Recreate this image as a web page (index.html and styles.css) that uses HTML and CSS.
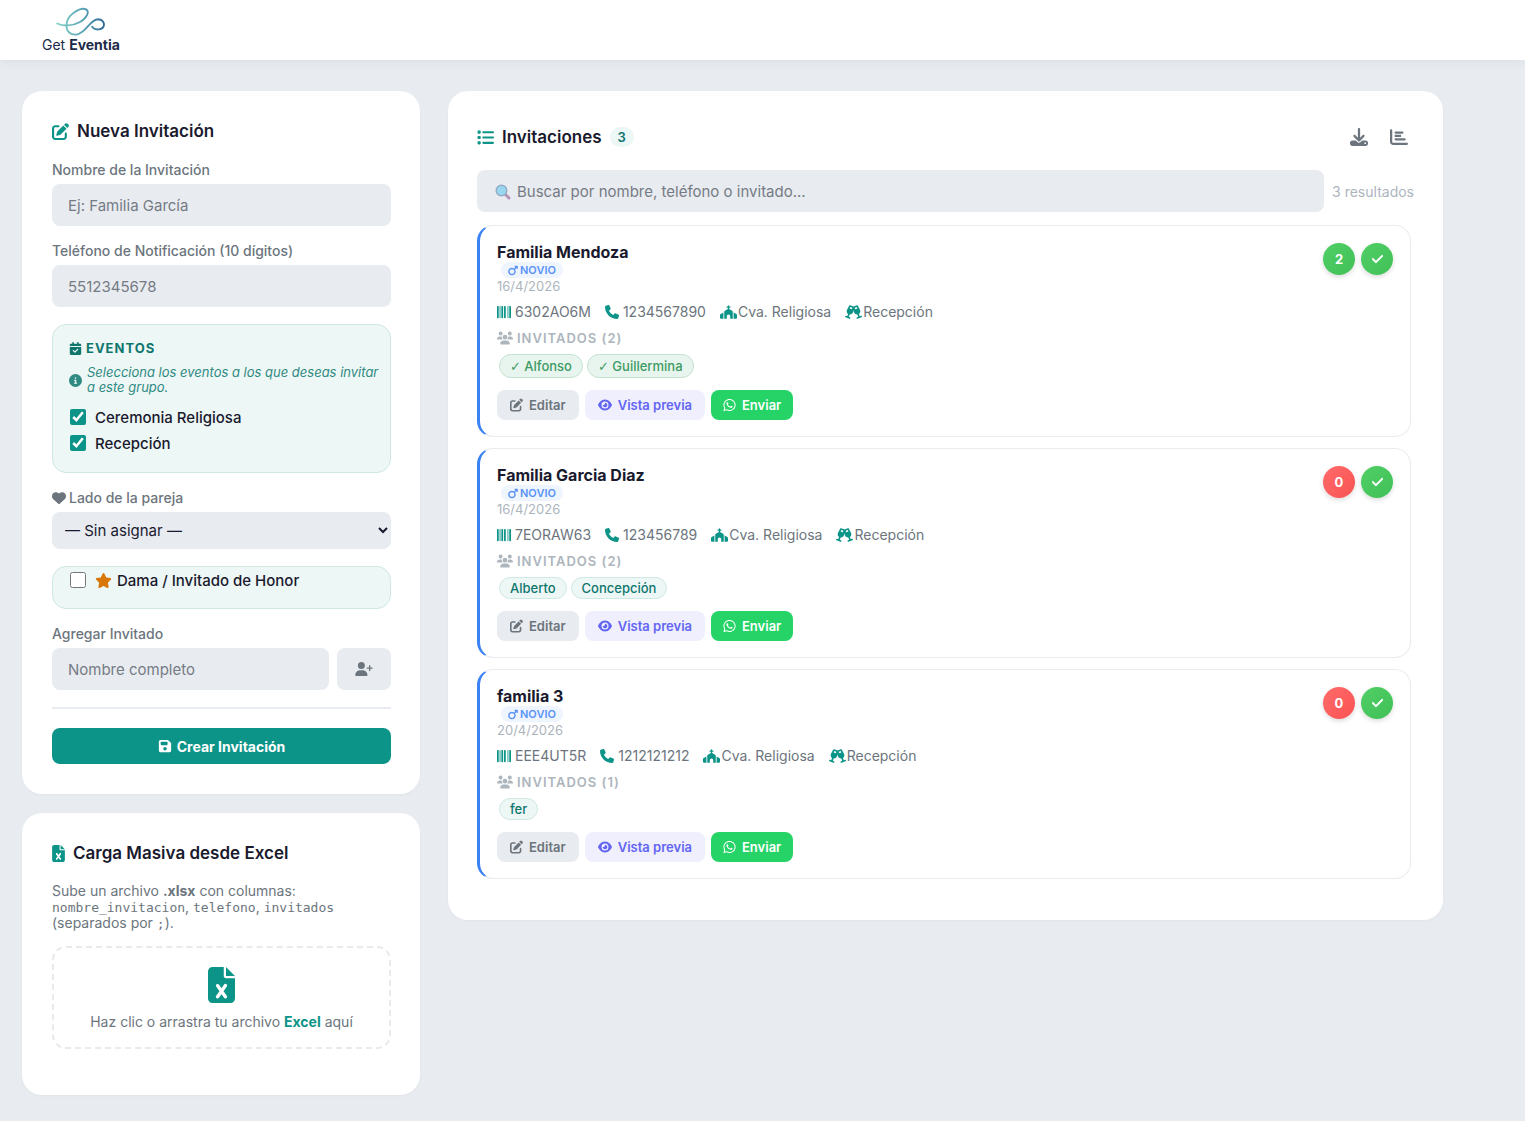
FILE: index.html
```html
<!DOCTYPE html>
<html lang="es">
<head>
<meta charset="UTF-8">
<meta name="viewport" content="width=device-width, initial-scale=1.0">
<title>Get Eventia - Invitaciones</title>
<link rel="stylesheet" href="styles.css">
</head>
<body>

<!-- Iconos -->
<svg class="sprite" aria-hidden="true">
  <symbol id="i-edit" viewBox="0 0 512 512"><path d="M471.6 21.7c-21.9-21.9-57.3-21.9-79.2 0L362.3 51.7l97.9 97.9 30.1-30.1c21.9-21.9 21.9-57.3 0-79.2L471.6 21.7zm-299.2 220c-6.1 6.1-10.8 13.6-13.5 21.9l-29.6 88.8c-2.9 8.6-.6 18.1 5.8 24.6s15.9 8.7 24.6 5.8l88.8-29.6c8.2-2.7 15.7-7.4 21.9-13.5L437.7 172.3 339.7 74.3 172.4 241.7zM96 64C43 64 0 107 0 160V416c0 53 43 96 96 96H352c53 0 96-43 96-96V320c0-17.7-14.3-32-32-32s-32 14.3-32 32v96c0 17.7-14.3 32-32 32H96c-17.7 0-32-14.3-32-32V160c0-17.7 14.3-32 32-32h96c17.7 0 32-14.3 32-32s-14.3-32-32-32H96z"/></symbol>
  <symbol id="i-heart" viewBox="0 0 512 512"><path d="M47.6 300.4L228.3 469.1c7.5 7 17.4 10.9 27.7 10.9s20.2-3.9 27.7-10.9L464.4 300.4c30.4-28.3 47.6-68 47.6-109.5v-5.8c0-69.9-50.5-129.5-119.4-141C347 36.5 300.6 51.4 268 84L256 96 244 84c-32.6-32.6-79-47.5-124.6-39.9C50.5 55.6 0 115.2 0 185.1v5.8c0 41.5 17.2 81.2 47.6 109.5z"/></symbol>
  <symbol id="i-star" viewBox="0 0 576 512"><path d="M316.9 18C311.6 7 300.4 0 288.1 0s-23.4 7-28.8 18L195 150.3 51.4 171.5c-12 1.8-22 10.2-25.7 21.7s-.7 24.2 7.9 32.7L137.8 329 113.2 474.7c-2 12 3 24.2 12.9 31.3s23 8 33.8 2.3l128.3-68.5 128.3 68.5c10.8 5.7 23.9 4.9 33.8-2.3s14.9-19.3 12.9-31.3L438.5 329 542.7 225.9c8.6-8.5 11.7-21.2 7.9-32.7s-13.7-19.9-25.7-21.7L381.2 150.3 316.9 18z"/></symbol>
  <symbol id="i-calendar" viewBox="0 0 448 512"><path d="M128 0c17.7 0 32 14.3 32 32V64H288V32c0-17.7 14.3-32 32-32s32 14.3 32 32V64h48c26.5 0 48 21.5 48 48v48H0V112C0 85.5 21.5 64 48 64H96V32c0-17.7 14.3-32 32-32zM0 192H448V464c0 26.5-21.5 48-48 48H48c-26.5 0-48-21.5-48-48V192zM329 305c9.4-9.4 9.4-24.6 0-33.9s-24.6-9.4-33.9 0l-95 95-47-47c-9.4-9.4-24.6-9.4-33.9 0s-9.4 24.6 0 33.9l64 64c9.4 9.4 24.6 9.4 33.9 0L329 305z"/></symbol>
  <symbol id="i-info" viewBox="0 0 512 512"><path d="M256 512A256 256 0 1 0 256 0a256 256 0 1 0 0 512zM216 336h24V272H216c-13.3 0-24-10.7-24-24s10.7-24 24-24h48c13.3 0 24 10.7 24 24v88h8c13.3 0 24 10.7 24 24s-10.7 24-24 24H216c-13.3 0-24-10.7-24-24s10.7-24 24-24zm40-208a32 32 0 1 1 0 64 32 32 0 1 1 0-64z"/></symbol>
  <symbol id="i-user-plus" viewBox="0 0 640 512"><path d="M96 128a128 128 0 1 1 256 0A128 128 0 1 1 96 128zM0 482.3C0 383.8 79.8 304 178.3 304h91.4C368.2 304 448 383.8 448 482.3c0 16.4-13.3 29.7-29.7 29.7H29.7C13.3 512 0 498.7 0 482.3zM504 312V248H440c-13.3 0-24-10.7-24-24s10.7-24 24-24h64V136c0-13.3 10.7-24 24-24s24 10.7 24 24v64h64c13.3 0 24 10.7 24 24s-10.7 24-24 24H552v64c0 13.3-10.7 24-24 24s-24-10.7-24-24z"/></symbol>
  <symbol id="i-save" viewBox="0 0 448 512"><path d="M64 32C28.7 32 0 60.7 0 96V416c0 35.3 28.7 64 64 64H384c35.3 0 64-28.7 64-64V173.3c0-17-6.7-33.3-18.7-45.3L352 50.7C340 38.7 323.7 32 306.7 32H64zm0 96c0-17.7 14.3-32 32-32H288c17.7 0 32 14.3 32 32v64c0 17.7-14.3 32-32 32H96c-17.7 0-32-14.3-32-32V128zM224 288a64 64 0 1 1 0 128 64 64 0 1 1 0-128z"/></symbol>
  <symbol id="i-excel" viewBox="0 0 384 512"><path d="M64 0C28.7 0 0 28.7 0 64V448c0 35.3 28.7 64 64 64H320c35.3 0 64-28.7 64-64V160H256c-17.7 0-32-14.3-32-32V0H64zM256 0V128H384L256 0zM155.7 250.2L192 302.1l36.3-51.9c7.6-10.9 22.6-13.5 33.4-5.9s13.5 22.6 5.9 33.4L221.3 344l46.4 66.2c7.6 10.9 5 25.8-5.9 33.4s-25.8 5-33.4-5.9L192 385.8l-36.3 51.9c-7.6 10.9-22.6 13.5-33.4 5.9s-13.5-22.6-5.9-33.4L162.7 344l-46.4-66.2c-7.6-10.9-5-25.8 5.9-33.4s25.8-5 33.4 5.9z"/></symbol>
  <symbol id="i-list" viewBox="0 0 512 512"><path d="M40 48C26.7 48 16 58.7 16 72v48c0 13.3 10.7 24 24 24H88c13.3 0 24-10.7 24-24V72c0-13.3-10.7-24-24-24H40zM192 64c-17.7 0-32 14.3-32 32s14.3 32 32 32H480c17.7 0 32-14.3 32-32s-14.3-32-32-32H192zm0 160c-17.7 0-32 14.3-32 32s14.3 32 32 32H480c17.7 0 32-14.3 32-32s-14.3-32-32-32H192zm0 160c-17.7 0-32 14.3-32 32s14.3 32 32 32H480c17.7 0 32-14.3 32-32s-14.3-32-32-32H192zM16 232v48c0 13.3 10.7 24 24 24H88c13.3 0 24-10.7 24-24V232c0-13.3-10.7-24-24-24H40c-13.3 0-24 10.7-24 24zM40 368c-13.3 0-24 10.7-24 24v48c0 13.3 10.7 24 24 24H88c13.3 0 24-10.7 24-24V392c0-13.3-10.7-24-24-24H40z"/></symbol>
  <symbol id="i-download" viewBox="0 0 512 512"><path d="M288 32c0-17.7-14.3-32-32-32s-32 14.3-32 32V274.7l-73.4-73.4c-12.5-12.5-32.8-12.5-45.3 0s-12.5 32.8 0 45.3l128 128c12.5 12.5 32.8 12.5 45.3 0l128-128c12.5-12.5 12.5-32.8 0-45.3s-32.8-12.5-45.3 0L288 274.7V32zM64 352c-35.3 0-64 28.7-64 64v32c0 35.3 28.7 64 64 64H448c35.3 0 64-28.7 64-64V416c0-35.3-28.7-64-64-64H346.5l-45.3 45.3c-25 25-65.5 25-90.5 0L165.5 352H64zm368 56a24 24 0 1 1 0 48 24 24 0 1 1 0-48z"/></symbol>
  <symbol id="i-chart" viewBox="0 0 512 512"><path d="M32 32c17.7 0 32 14.3 32 32V400c0 8.8 7.2 16 16 16H480c17.7 0 32 14.3 32 32s-14.3 32-32 32H80c-44.2 0-80-35.8-80-80V64C0 46.3 14.3 32 32 32zm96 96c0-17.7 14.3-32 32-32l192 0c17.7 0 32 14.3 32 32s-14.3 32-32 32H160c-17.7 0-32-14.3-32-32zm32 64H288c17.7 0 32 14.3 32 32s-14.3 32-32 32H160c-17.7 0-32-14.3-32-32s14.3-32 32-32zm0 96H416c17.7 0 32 14.3 32 32s-14.3 32-32 32H160c-17.7 0-32-14.3-32-32s14.3-32 32-32z"/></symbol>
  <symbol id="i-mars" viewBox="0 0 448 512"><path d="M289.8 46.8c3.7-9 12.5-14.8 22.2-14.8H424c13.3 0 24 10.7 24 24V168c0 9.7-5.8 18.5-14.8 22.2s-19.3 1.7-26.2-5.2l-33.4-33.4L321 204.2c19.5 28.4 31 62.7 31 99.8c0 97.2-78.8 176-176 176S0 401.2 0 304s78.8-176 176-176c37 0 71.4 11.4 99.8 31l52.6-52.6L295 73c-6.9-6.9-8.9-17.2-5.2-26.2zM176 416a112 112 0 1 0 0-224 112 112 0 1 0 0 224z"/></symbol>
  <symbol id="i-barcode" viewBox="0 0 512 512"><path d="M24 32C10.7 32 0 42.7 0 56V456c0 13.3 10.7 24 24 24H40c13.3 0 24-10.7 24-24V56c0-13.3-10.7-24-24-24H24zm88 0c-8.8 0-16 7.2-16 16V464c0 8.8 7.2 16 16 16s16-7.2 16-16V48c0-8.8-7.2-16-16-16zm72 0c-13.3 0-24 10.7-24 24V456c0 13.3 10.7 24 24 24h16c13.3 0 24-10.7 24-24V56c0-13.3-10.7-24-24-24H184zm96 0c-13.3 0-24 10.7-24 24V456c0 13.3 10.7 24 24 24h16c13.3 0 24-10.7 24-24V56c0-13.3-10.7-24-24-24H280zM448 56V456c0 13.3 10.7 24 24 24h16c13.3 0 24-10.7 24-24V56c0-13.3-10.7-24-24-24H472c-13.3 0-24 10.7-24 24zm-64-8V464c0 8.8 7.2 16 16 16s16-7.2 16-16V48c0-8.8-7.2-16-16-16s-16 7.2-16 16z"/></symbol>
  <symbol id="i-phone" viewBox="0 0 512 512"><path d="M164.9 24.6c-7.7-18.6-28-28.5-47.4-23.2l-88 24C12.1 30.2 0 46 0 64C0 311.4 200.6 512 448 512c18 0 33.8-12.1 38.6-29.5l24-88c5.3-19.4-4.6-39.7-23.2-47.4l-96-40c-16.3-6.8-35.2-2.1-46.3 11.6L304.7 368C234.3 334.7 177.3 277.7 144 207.3L193.3 167c13.7-11.2 18.4-30 11.6-46.3l-40-96z"/></symbol>
  <symbol id="i-church" viewBox="0 0 640 512"><path d="M344 24c0-13.3-10.7-24-24-24s-24 10.7-24 24V48H264c-13.3 0-24 10.7-24 24s10.7 24 24 24h32v46.4L183.3 210c-14.5 8.7-23.3 24.3-23.3 41.2V512h96V416c0-35.3 28.7-64 64-64s64 28.7 64 64v96h96V251.2c0-16.9-8.8-32.5-23.3-41.2L344 142.4V96h32c13.3 0 24-10.7 24-24s-10.7-24-24-24H344V24zM24.9 330.3C9.5 338.8 0 354.9 0 372.4V464c0 26.5 21.5 48 48 48h80V273.6L24.9 330.3zM592 512c26.5 0 48-21.5 48-48V372.4c0-17.5-9.5-33.6-24.9-42.1L512 273.6V512h80z"/></symbol>
  <symbol id="i-glasses" viewBox="0 0 640 512"><path d="M155.6 17.3C163 3 179.9-3.6 195 1.9L320 47.5l125-45.6c15.1-5.5 32 1.1 39.4 15.4l78.8 152.9c28.8 55.8 10.3 122.3-38.5 156.6L556.1 413l41-15c16.6-6 35 2.5 41 19.1s-2.5 35-19.1 41l-71.1 25.9L476.8 510c-16.6 6.1-35-2.5-41-19.1s2.5-35 19.1-41l41-15-31.3-86.2c-59.4 5.2-116.2-34-130-95.2L320 188.8l-14.6 64.7c-13.8 61.3-70.6 100.4-130 95.2l-31.3 86.2 41 15c16.6 6 25.2 24.4 19.1 41s-24.4 25.2-41 19.1L92.2 484.1 21.1 458.2c-16.6-6.1-25.2-24.4-19.1-41s24.4-25.2 41-19.1l41 15 31.3-86.2C66.5 292.5 48.1 226 76.9 170.2L155.6 17.3zm44 54.4l-27.2 52.8L261.6 157l13.1-57.9L199.6 71.7zm240.9 0L365.4 99.1 378.5 157l89.2-32.5L440.5 71.7z"/></symbol>
  <symbol id="i-users" viewBox="0 0 640 512"><path d="M144 0a80 80 0 1 1 0 160A80 80 0 1 1 144 0zM512 0a80 80 0 1 1 0 160A80 80 0 1 1 512 0zM0 298.7C0 239.8 47.8 192 106.7 192h42.7c15.9 0 31 3.5 44.6 9.7c-1.3 7.2-1.9 14.7-1.9 22.3c0 38.2 16.8 72.5 43.3 96c-.2 0-.4 0-.7 0H21.3C9.6 320 0 310.4 0 298.7zM405.3 320c-.2 0-.4 0-.7 0c26.6-23.5 43.3-57.8 43.3-96c0-7.6-.7-15-1.9-22.3c13.6-6.3 28.7-9.7 44.6-9.7h42.7C592.2 192 640 239.8 640 298.7c0 11.8-9.6 21.3-21.3 21.3H405.3zM224 224a96 96 0 1 1 192 0 96 96 0 1 1 -192 0zM128 485.3C128 411.7 187.7 352 261.3 352H378.7C452.3 352 512 411.7 512 485.3c0 14.7-11.9 26.7-26.7 26.7H154.7c-14.7 0-26.7-11.9-26.7-26.7z"/></symbol>
  <symbol id="i-eye" viewBox="0 0 576 512"><path d="M288 32c-80.8 0-145.5 36.8-192.6 80.6C48.6 156 17.3 208 2.5 243.7c-3.3 7.9-3.3 16.7 0 24.6C17.3 304 48.6 356 95.4 399.4C142.5 443.2 207.2 480 288 480s145.5-36.8 192.6-80.6c46.8-43.5 78.1-95.4 93-131.1c3.3-7.9 3.3-16.7 0-24.6c-14.9-35.7-46.2-87.7-93-131.1C433.5 68.8 368.8 32 288 32zM144 256a144 144 0 1 1 288 0 144 144 0 1 1 -288 0zm144-64c0 35.3-28.7 64-64 64c-7.1 0-13.9-1.2-20.3-3.3c-5.5-1.8-11.9 1.6-11.7 7.4c.3 6.9 1.3 13.8 3.2 20.7c13.7 51.2 66.4 81.6 117.6 67.9s81.6-66.4 67.9-117.6c-11.1-41.5-47.8-69.4-88.6-71.1c-5.8-.2-9.2 6.1-7.4 11.7c2.1 6.4 3.3 13.2 3.3 20.3z"/></symbol>
  <symbol id="i-whatsapp" viewBox="0 0 448 512"><path d="M380.9 97.1C339 55.1 283.2 32 223.9 32c-122.4 0-222 99.6-222 222 0 39.1 10.2 77.3 29.6 111L0 480l117.7-30.9c32.4 17.7 68.9 27 106.1 27h.1c122.3 0 224.1-99.6 224.1-222 0-59.3-25.2-115-67.1-157zm-157 341.6c-33.2 0-65.7-8.9-94-25.7l-6.7-4-69.8 18.3L72 359.2l-4.4-7c-18.5-29.4-28.2-63.3-28.2-98.2 0-101.7 82.8-184.5 184.6-184.5 49.3 0 95.6 19.2 130.4 54.1 34.8 34.9 56.2 81.2 56.1 130.5 0 101.8-84.9 184.6-186.6 184.6zm101.2-138.2c-5.5-2.8-32.8-16.2-37.9-18-5.1-1.9-8.8-2.8-12.5 2.8-3.7 5.6-14.3 18-17.6 21.8-3.2 3.7-6.5 4.2-12 1.4-32.6-16.3-54-29.1-75.5-66-5.7-9.8 5.7-9.1 16.3-30.3 1.8-3.7.9-6.9-.5-9.7-1.4-2.8-12.5-30.1-17.1-41.2-4.5-10.8-9.1-9.3-12.5-9.5-3.2-.2-6.9-.2-10.6-.2-3.7 0-9.7 1.4-14.8 6.9-5.1 5.6-19.4 19-19.4 46.3 0 27.3 19.9 53.7 22.6 57.4 2.8 3.7 39.1 59.7 94.8 83.8 35.2 15.2 49 16.5 66.6 13.9 10.7-1.6 32.8-13.4 37.4-26.4 4.6-13 4.6-24.1 3.2-26.4-1.3-2.5-5-3.9-10.5-6.6z"/></symbol>
  <symbol id="i-check" viewBox="0 0 448 512"><path d="M438.6 105.4c12.5 12.5 12.5 32.8 0 45.3l-256 256c-12.5 12.5-32.8 12.5-45.3 0l-128-128c-12.5-12.5-12.5-32.8 0-45.3s32.8-12.5 45.3 0L160 338.7 393.4 105.4c12.5-12.5 32.8-12.5 45.3 0z" stroke="currentColor" stroke-width="20"/></symbol>
</svg>

<header class="topbar">
  <a class="logo" href="#">
    <svg class="logo-mark" viewBox="54 7 54 31" aria-hidden="true">
      <defs>
        <linearGradient id="logoGrad" gradientUnits="userSpaceOnUse" x1="56" y1="0" x2="106" y2="0">
          <stop offset="0" stop-color="#7fd0c4"/>
          <stop offset="0.5" stop-color="#5fa9b8"/>
          <stop offset="1" stop-color="#2d6496"/>
        </linearGradient>
      </defs>
      <path d="M56.5 24 C62 27 72 27 80 22.5 C87 18.500 90 12 86.500 9.700 C81 6.500 66 15 66 26 C66 33 71 36 76 35.500 C86 34.500 90 20 98.500 19.700 C103 19.700 105.500 23 104.500 26.500 C103 31 95 31.500 92.500 27.500" fill="none" stroke="url(#logoGrad)" stroke-width="1.900" stroke-linecap="round"/>
    </svg>
    <span class="logo-text">Get <b>Eventia</b></span>
  </a>
</header>

<main class="layout">
  <div class="sidebar">
    <section class="card">
      <h2 class="card-title"><svg class="icon"><use href="#i-edit"/></svg>Nueva Invitación</h2>
      <form id="invitacionForm">
        <div class="field">
          <label for="nombre">Nombre de la Invitación</label>
          <input class="text-input" type="text" id="nombre" placeholder="Ej: Familia García">
        </div>
        <div class="field">
          <label for="telefono">Teléfono de Notificación (10 dígitos)</label>
          <input class="text-input" type="tel" id="telefono" placeholder="5512345678">
        </div>

        <div class="box">
          <div class="box-title"><svg class="icon"><use href="#i-calendar"/></svg>EVENTOS</div>
          <p class="box-note"><svg class="icon"><use href="#i-info"/></svg><span>Selecciona los eventos a los que deseas invitar a este grupo.</span></p>
          <label class="check"><input type="checkbox" checked>Ceremonia Religiosa</label>
          <label class="check"><input type="checkbox" checked>Recepción</label>
        </div>

        <div class="field">
          <label for="lado"><svg class="icon"><use href="#i-heart"/></svg>Lado de la pareja</label>
          <select class="select" id="lado">
            <option>— Sin asignar —</option>
            <option>Novio</option>
            <option>Novia</option>
          </select>
        </div>

        <div class="box box-honor">
          <label class="check"><input type="checkbox"><svg class="icon star"><use href="#i-star"/></svg>Dama / Invitado de Honor</label>
        </div>

        <div class="field">
          <label for="invitado">Agregar Invitado</label>
          <div class="add-row">
            <input class="text-input" type="text" id="invitado" placeholder="Nombre completo">
            <button class="btn-add" type="button" aria-label="Agregar"><svg class="icon"><use href="#i-user-plus"/></svg></button>
          </div>
        </div>

        <hr>
        <button class="btn-primary" type="submit"><svg class="icon"><use href="#i-save"/></svg>Crear Invitación</button>
      </form>
    </section>

    <section class="card">
      <h2 class="card-title"><svg class="icon excel"><use href="#i-excel"/></svg>Carga Masiva desde Excel</h2>
      <p class="help">Sube un archivo <b>.xlsx</b> con columnas:<br><code>nombre_invitacion</code>, <code>telefono</code>, <code>invitados</code><br>(separados por <code>;</code>).</p>
      <button class="dropzone" type="button">
        <svg class="icon"><use href="#i-excel"/></svg>
        <span>Haz clic o arrastra tu archivo <b>Excel</b> aquí</span>
      </button>
    </section>
  </div>

  <section class="card card-list">
    <div class="list-head">
      <h2 class="card-title"><svg class="icon"><use href="#i-list"/></svg>Invitaciones <span class="count">3</span></h2>
      <div class="tools">
        <button type="button" aria-label="Descargar"><svg class="icon"><use href="#i-download"/></svg></button>
        <button type="button" aria-label="Estadísticas"><svg class="icon"><use href="#i-chart"/></svg></button>
      </div>
    </div>

    <div class="search-row">
      <div class="search">
        <svg class="search-icon" viewBox="0 0 16 16" aria-hidden="true">
          <path d="M10.5 10.5 L14 14" stroke="#b294b8" stroke-width="3" stroke-linecap="round"/>
          <circle cx="6.5" cy="6.5" r="5.3" fill="#97d8f0" stroke="#93a9c4" stroke-width="1.4"/>
        </svg>
        <input class="text-input" type="search" aria-label="Buscar" placeholder="Buscar por nombre, teléfono o invitado...">
      </div>
      <span class="results">3 resultados</span>
    </div>

    <div class="items">
      <article class="item">
        <div class="item-head">
          <div>
            <h3>Familia Mendoza</h3>
            <span class="side"><svg class="icon"><use href="#i-mars"/></svg>NOVIO</span>
            <div class="date">16/4/2026</div>
          </div>
          <div class="badges">
            <span class="badge ok">2</span>
            <span class="badge ok"><svg class="icon"><use href="#i-check"/></svg></span>
          </div>
        </div>
        <div class="meta">
          <span><svg class="icon"><use href="#i-barcode"/></svg>6302AO6M</span>
          <span><svg class="icon"><use href="#i-phone"/></svg>1234567890</span>
          <span class="event"><svg class="icon"><use href="#i-church"/></svg>Cva. Religiosa</span>
          <span class="event"><svg class="icon"><use href="#i-glasses"/></svg>Recepción</span>
        </div>
        <div class="guests-title"><svg class="icon"><use href="#i-users"/></svg>INVITADOS (2)</div>
        <div class="chips">
          <span class="chip confirmed"><span class="tick">✓</span> Alfonso</span>
          <span class="chip confirmed"><span class="tick">✓</span> Guillermina</span>
        </div>
        <div class="actions">
          <button class="btn" type="button"><svg class="icon"><use href="#i-edit"/></svg>Editar</button>
          <button class="btn preview" type="button"><svg class="icon"><use href="#i-eye"/></svg>Vista previa</button>
          <button class="btn send" type="button"><svg class="icon"><use href="#i-whatsapp"/></svg>Enviar</button>
        </div>
      </article>

      <article class="item">
        <div class="item-head">
          <div>
            <h3>Familia Garcia Diaz</h3>
            <span class="side"><svg class="icon"><use href="#i-mars"/></svg>NOVIO</span>
            <div class="date">16/4/2026</div>
          </div>
          <div class="badges">
            <span class="badge zero">0</span>
            <span class="badge ok"><svg class="icon"><use href="#i-check"/></svg></span>
          </div>
        </div>
        <div class="meta">
          <span><svg class="icon"><use href="#i-barcode"/></svg>7EORAW63</span>
          <span><svg class="icon"><use href="#i-phone"/></svg>123456789</span>
          <span class="event"><svg class="icon"><use href="#i-church"/></svg>Cva. Religiosa</span>
          <span class="event"><svg class="icon"><use href="#i-glasses"/></svg>Recepción</span>
        </div>
        <div class="guests-title"><svg class="icon"><use href="#i-users"/></svg>INVITADOS (2)</div>
        <div class="chips">
          <span class="chip">Alberto</span>
          <span class="chip">Concepción</span>
        </div>
        <div class="actions">
          <button class="btn" type="button"><svg class="icon"><use href="#i-edit"/></svg>Editar</button>
          <button class="btn preview" type="button"><svg class="icon"><use href="#i-eye"/></svg>Vista previa</button>
          <button class="btn send" type="button"><svg class="icon"><use href="#i-whatsapp"/></svg>Enviar</button>
        </div>
      </article>

      <article class="item">
        <div class="item-head">
          <div>
            <h3>familia 3</h3>
            <span class="side"><svg class="icon"><use href="#i-mars"/></svg>NOVIO</span>
            <div class="date">20/4/2026</div>
          </div>
          <div class="badges">
            <span class="badge zero">0</span>
            <span class="badge ok"><svg class="icon"><use href="#i-check"/></svg></span>
          </div>
        </div>
        <div class="meta">
          <span><svg class="icon"><use href="#i-barcode"/></svg>EEE4UT5R</span>
          <span><svg class="icon"><use href="#i-phone"/></svg>1212121212</span>
          <span class="event"><svg class="icon"><use href="#i-church"/></svg>Cva. Religiosa</span>
          <span class="event"><svg class="icon"><use href="#i-glasses"/></svg>Recepción</span>
        </div>
        <div class="guests-title"><svg class="icon"><use href="#i-users"/></svg>INVITADOS (1)</div>
        <div class="chips">
          <span class="chip">fer</span>
        </div>
        <div class="actions">
          <button class="btn" type="button"><svg class="icon"><use href="#i-edit"/></svg>Editar</button>
          <button class="btn preview" type="button"><svg class="icon"><use href="#i-eye"/></svg>Vista previa</button>
          <button class="btn send" type="button"><svg class="icon"><use href="#i-whatsapp"/></svg>Enviar</button>
        </div>
      </article>
    </div>
  </section>
</main>

</body>
</html>
```

FILE: styles.css
```css
* {
  box-sizing: border-box;
}

body {
  margin: 0;
  font-family: Inter, sans-serif;
  font-size: 14px;
  color: #1a1a2e;
  background-color: #e8ebf0;
}

button, input, select {
  font-family: inherit;
  border: none;
}

button {
  cursor: pointer;
}

.sprite {
  display: none;
}

.icon {
  width: 14px;
  height: 14px;
  fill: currentColor;
  flex-shrink: 0;
}

/* Header */
.topbar {
  display: flex;
  height: 60px;
  padding: 7px 42px;
  background-color: #fff;
  box-shadow: 0 2px 10px rgba(0, 0, 0, 0.06);
}

.logo {
  display: flex;
  flex-direction: column;
  align-items: center;
  color: #1c2b4a;
  text-decoration: none;
}

.logo-mark {
  width: 54px;
  height: 31px;
}

.logo-text {
  font-size: 14px;
  line-height: 16px;
}

/* Layout */
.layout {
  display: grid;
  grid-template-columns: 28fr 70fr;
  column-gap: 28px;
  align-items: start;
  padding: 31px 82px 26px 22px;
}

.sidebar {
  display: flex;
  flex-direction: column;
  gap: 19px;
}

.card {
  background-color: #fff;
  border-radius: 20px;
  padding: 30px 29px 30px 30px;
  box-shadow: 0 1px 3px rgba(0, 0, 0, 0.03);
}

.card-title {
  display: flex;
  align-items: center;
  gap: 8px;
  margin: 0 0 20px;
  font-size: 17px;
  font-weight: 600;
  line-height: 20px;
}

.card-title .icon {
  width: 17px;
  height: 17px;
  color: #0d9488;
}

.card-title .icon.excel {
  width: 13px;
}

/* Form */
.field {
  margin-bottom: 16px;
}

.field label {
  display: flex;
  align-items: center;
  gap: 3px;
  margin-bottom: 6px;
  font-size: 14px;
  font-weight: 500;
  line-height: 17px;
  color: #6c757d;
}

.text-input {
  width: 100%;
  height: 42px;
  padding: 0 16px;
  font-size: 15px;
  color: #1a1a2e;
  background-color: #e8ebf0;
  border-radius: 8px;
}

.text-input::placeholder {
  color: #757b85;
}

.box {
  margin: 17px 0 16px;
  padding: 15px 8px 16px 16px;
  border: 1px solid #cfe8e4;
  border-radius: 14px;
  background-color: #edf7f6;
}

.box-title {
  display: flex;
  align-items: center;
  gap: 4px;
  font-size: 13px;
  font-weight: 700;
  line-height: 16px;
  letter-spacing: 1px;
  color: #0f766e;
}

.box-title .icon {
  width: 13px;
  height: 13px;
}

.box-note {
  display: flex;
  align-items: center;
  gap: 5px;
  margin: 9px 0;
  font-size: 13px;
  font-style: italic;
  line-height: 15px;
  color: #2f8a83;
}

.box-note .icon {
  width: 13px;
  height: 13px;
}

.check {
  display: flex;
  align-items: center;
  height: 26px;
  font-size: 15px;
  font-weight: 500;
}

.check input {
  width: 16px;
  height: 16px;
  margin: 0 9px 0 1px;
  accent-color: #0d9488;
}

.check .star {
  width: 17px;
  height: 15px;
  margin-right: 5px;
  color: #d97706;
}

.box-honor {
  padding-top: 0;
  padding-bottom: 15px;
}

.select {
  width: 100%;
  height: 37px;
  padding: 0 9px;
  font-size: 15px;
  color: #1a1a2e;
  background-color: #e8ebf0;
  border-radius: 8px;
}

.add-row {
  display: flex;
  gap: 8px;
}

.add-row .text-input {
  flex: 1;
  min-width: 0;
}

.btn-add {
  display: flex;
  align-items: center;
  justify-content: center;
  width: 54px;
  border-radius: 8px;
  color: #6c757d;
  background-color: #e8ebf0;
}

.btn-add .icon {
  width: 18px;
}

hr {
  margin: 17px 0 19px;
  border: none;
  border-top: 2px solid #e8ebf0;
}

.btn-primary {
  display: flex;
  align-items: center;
  justify-content: center;
  gap: 5px;
  width: 100%;
  height: 36px;
  border-radius: 8px;
  font-size: 14px;
  font-weight: 700;
  color: #fff;
  background-color: #0d9488;
}

/* Excel */
.help {
  margin: 0 0 15px;
  font-size: 14px;
  line-height: 16px;
  color: #6c757d;
}

.help code {
  font-family: Consolas, "DejaVu Sans Mono", monospace;
  font-size: 13px;
  line-height: 14px;
}

.dropzone {
  display: flex;
  flex-direction: column;
  align-items: center;
  gap: 10px;
  width: 100%;
  padding: 19px 16px 17px;
  margin-bottom: 16px;
  border: 2px dashed #e8ebee;
  border-radius: 14px;
  font-size: 14px;
  line-height: 17px;
  color: #6c757d;
  background-color: #fff;
}

.dropzone .icon {
  width: 27px;
  height: 36px;
  color: #0d9488;
}

.dropzone b {
  color: #0d9488;
}

/* Invitaciones */
.list-head {
  display: flex;
  align-items: center;
  justify-content: space-between;
  height: 32px;
  margin-bottom: 17px;
}

.list-head .card-title {
  margin: 0;
}

.count {
  padding: 0 8px;
  border-radius: 10px;
  font-size: 13px;
  font-weight: 600;
  color: #0f766e;
  background-color: #edf7f6;
}

.tools {
  display: flex;
  gap: 22px;
  padding-right: 6px;
}

.tools button {
  display: flex;
  padding: 0;
  color: #6c757d;
  background: none;
}

.tools .icon {
  width: 18px;
  height: 18px;
}

.search-row {
  display: flex;
  align-items: center;
  gap: 8px;
  margin-bottom: 13px;
}

.search {
  position: relative;
  flex: 1;
}

.search .text-input {
  padding-left: 40px;
}

/* lupa encima del campo */
.search-icon {
  position: absolute;
  top: 14px;
  left: 18px;
  width: 16px;
  height: 16px;
}

.results {
  font-size: 14px;
  color: #adb5bd;
}

.card-list {
  padding: 30px 29px;
}

.items {
  display: flex;
  flex-direction: column;
  gap: 11px;
  padding: 0 3px 11px 0;
}

.item {
  padding: 17px 17px 16px;
  border: 1px solid #e8ebf0;
  border-left: 3px solid #3b82f6;
  border-radius: 16px;
}

.item-head {
  display: flex;
  justify-content: space-between;
}

.item h3 {
  margin: 0;
  font-size: 16px;
  font-weight: 700;
  line-height: 19px;
}

.side {
  display: flex;
  align-items: center;
  gap: 2px;
  width: max-content;
  height: 16px;
  margin-left: 4px;
  padding: 0 7px;
  border-radius: 8px;
  font-size: 11px;
  font-weight: 600;
  color: #5b93f5;
  background-color: #eff5ff;
}

.side .icon {
  width: 10px;
  height: 11px;
}

.date {
  font-size: 13px;
  line-height: 16px;
  color: #adb5bd;
}

.badges {
  display: flex;
  gap: 6px;
}

.badge {
  display: flex;
  align-items: center;
  justify-content: center;
  width: 32px;
  height: 32px;
  border-radius: 50%;
  font-size: 13px;
  font-weight: 700;
  color: #fff;
  box-shadow: 0 2px 5px rgba(0, 0, 0, 0.15);
}

.badge.ok {
  background: linear-gradient(135deg, #51cf66, #40c057);
}

.badge.zero {
  background: linear-gradient(135deg, #ff6b6b, #fa5252);
}

.badge .icon {
  width: 11px;
}

.meta {
  display: flex;
  gap: 14px;
  margin-top: 10px;
  font-size: 14px;
  line-height: 16px;
  color: #6c757d;
}

.meta span {
  display: flex;
  align-items: center;
  gap: 4px;
}

.meta .icon {
  color: #0d9488;
}

.meta .event {
  gap: 1px;
}

.meta .event .icon {
  width: 17px;
}

.guests-title {
  display: flex;
  align-items: center;
  gap: 4px;
  margin-top: 10px;
  font-size: 13px;
  font-weight: 600;
  line-height: 16px;
  letter-spacing: 1px;
  color: #adb5bd;
}

.guests-title .icon {
  width: 16px;
}

.chips {
  display: flex;
  gap: 4px;
  margin: 8px 2px 12px;
}

.chip {
  padding: 0 10px;
  border: 1px solid #cfe8e4;
  border-radius: 12px;
  font-size: 13px;
  font-weight: 500;
  line-height: 20px;
  color: #0f766e;
  background-color: #edf7f6;
}

.chip.confirmed {
  line-height: 22px;
  color: #3d9b63;
  border-color: #c3e2d0;
  background-color: #e8f5ee;
}

.tick {
  font-family: "DejaVu Sans", sans-serif;
  font-size: 13px;
  line-height: 12px;
}

.actions {
  display: flex;
  gap: 6px;
}

.btn {
  display: flex;
  align-items: center;
  gap: 6px;
  height: 30px;
  padding: 0 13px;
  border-radius: 8px;
  font-size: 13px;
  font-weight: 600;
  color: #6c757d;
  background-color: #e8ebf0;
}

.btn .icon {
  width: 13px;
}

.btn.preview {
  color: #6366f1;
  background-color: #efeffe;
}

.btn.preview .icon {
  width: 14px;
}

.btn.send {
  padding: 0 12px;
  color: #fff;
  background-color: #25d366;
}
```
